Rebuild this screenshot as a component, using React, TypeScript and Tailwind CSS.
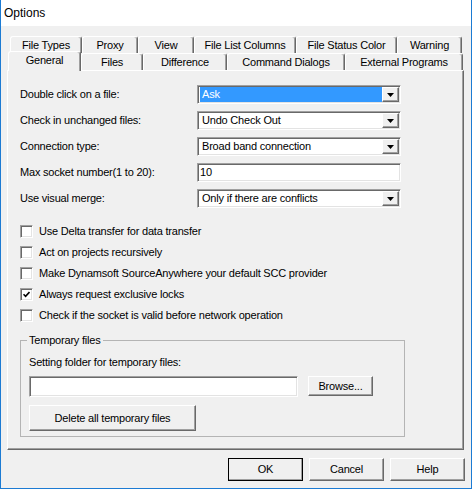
import React from 'react';

const backTabs = [
  { label: 'File Types', w: 'w-[72px]' },
  { label: 'Proxy', w: 'w-[56px]' },
  { label: 'View', w: 'w-[56px]' },
  { label: 'File List Columns', w: 'w-[102px]' },
  { label: 'File Status Color', w: 'w-[101px]' },
  { label: 'Warning', w: 'w-[65px]' },
];

const frontTabs = [
  { label: 'Files', w: 'w-[62px]' },
  { label: 'Difference', w: 'w-[84px]' },
  { label: 'Command Dialogs', w: 'w-[118px]' },
  { label: 'External Programs', w: 'w-[118px]' },
];

const checks = [
  { label: 'Use Delta transfer for data transfer', on: false },
  { label: 'Act on projects recursively', on: false },
  { label: 'Make Dynamsoft SourceAnywhere your default SCC provider', on: false },
  { label: 'Always request exclusive locks', on: true },
  { label: 'Check if the socket is valid before network operation', on: false },
];

const sunken =
  'border border-t-[#a0a0a0] border-l-[#a0a0a0] border-r-white border-b-white shadow-[inset_1px_1px_0_#696969,inset_-1px_-1px_0_#e3e3e3] bg-white';

const raised =
  'border border-t-white border-l-white border-r-[#696969] border-b-[#696969] shadow-[inset_-1px_-1px_0_#a0a0a0] bg-[#f0f0f0]';

const Tab: React.FC<{ label: string; w: string }> = ({ label, w }) => (
  <div
    className={`${w} h-full flex items-center justify-center border-t border-l border-white border-r border-r-[#696969] rounded-t-[3px] shadow-[inset_-1px_0_0_#a0a0a0]`}
  >
    {label}
  </div>
);

const DropArrow = () => (
  <div className={`${raised} w-[17px] h-full flex items-center justify-center`}>
    <svg width="7" height="4" viewBox="0 0 7 4">
      <path d="M0 0H7L3.5 4Z" fill="#000" />
    </svg>
  </div>
);

const Combo: React.FC<{ value: string; selected?: boolean }> = ({ value, selected }) => (
  <div className={`${sunken} h-[19px] p-px flex`}>
    <div className="flex-1 flex items-center pl-px">
      <span
        className={`flex-1 h-[15px] flex items-center pl-[2px] ${selected ? 'bg-[#3399ff] text-white' : ''}`}
      >
        {value}
      </span>
    </div>
    <DropArrow />
  </div>
);

const WinButton: React.FC<{ label: string; cls: string; isDefault?: boolean }> = ({ label, cls, isDefault }) => (
  <div className={`${cls} ${isDefault ? 'outline outline-1 outline-black -outline-offset-1' : ''} ${raised} flex items-center justify-center`}>
    {label}
  </div>
);

export default function App() {
  return (
    <div className="w-[472px] h-[489px] flex flex-col border-x border-b border-[#1c7bd3] bg-[#f0f0f0] font-['Liberation_Sans',Arial,sans-serif] text-[11px] tracking-[-0.2px] text-black leading-[13px] overflow-hidden">
      {/* Title bar */}
      <div className="h-[26px] bg-white pl-[3px] flex items-center text-[12px] tracking-normal">Options</div>

      <div className="px-[6px] pt-[10px]">
        {/* Tabs */}
        <div className="flex ml-[3px] h-[17px]">
          {backTabs.map((t) => (
            <Tab key={t.label} {...t} />
          ))}
        </div>
        <div className="flex ml-[3px] h-[17px]">
          <div className="relative z-10 -ml-[2px] -mt-[2px] w-[73px] h-[20px] pb-[2px] flex items-center justify-center bg-[#f0f0f0] border-t border-l border-white border-r border-r-[#696969] rounded-t-[3px] shadow-[inset_-1px_0_0_#a0a0a0]">
            General
          </div>
          {frontTabs.map((t) => (
            <Tab key={t.label} {...t} />
          ))}
        </div>

        {/* Tab page */}
        <div className="w-[457px] h-[380px] border border-t-white border-l-white border-r-[#696969] border-b-[#696969] shadow-[inset_-1px_-1px_0_#a0a0a0] pl-[12px] pt-[14px]">
          <div className="grid grid-cols-[177px_204px] gap-y-[7px] items-center">
            <span>Double click on a file:</span>
            <Combo value="Ask" selected />
            <span>Check in unchanged files:</span>
            <Combo value="Undo Check Out" />
            <span>Connection type:</span>
            <Combo value="Broad band connection" />
            <span>Max socket number(1 to 20):</span>
            <div className={`${sunken} h-[19px] flex items-center pl-[2px]`}>10</div>
            <span>Use visual merge:</span>
            <Combo value="Only if there are conflicts" />
          </div>

          <div className="mt-[17px] flex flex-col gap-[8px]">
            {checks.map((c) => (
              <div key={c.label} className="flex items-center gap-[6px] h-[13px]">
                <div className={`${sunken} w-[13px] h-[13px] flex items-center justify-center`}>
                  {c.on && (
                    <svg width="7" height="7" viewBox="0 0 7 7">
                      <path d="M0.5 3.2L2.6 5.4L6.5 1" stroke="#000" strokeWidth="1.6" fill="none" />
                    </svg>
                  )}
                </div>
                <span>{c.label}</span>
              </div>
            ))}
          </div>

          <fieldset className="mt-[12px] w-[385px] border border-[#b4b4b4] px-[8px] pb-[5px]">
            <legend className="-ml-[2px] px-[2px]">Temporary files</legend>
            <div className="mt-[9px]">Setting folder for temporary files:</div>
            <div className="mt-[7px] flex items-start gap-[10px]">
              <div className={`${sunken} w-[269px] h-[21px]`} />
              <WinButton label="Browse..." cls="w-[65px] h-[20px]" />
            </div>
            <WinButton label="Delete all temporary files" cls="mt-[8px] w-[167px] h-[26px]" />
          </fieldset>
        </div>

        {/* Dialog buttons */}
        <div className="mt-[8px] flex justify-end gap-[6px]">
          <WinButton label="OK" cls="w-[75px] h-[23px]" isDefault />
          <WinButton label="Cancel" cls="w-[75px] h-[23px]" />
          <WinButton label="Help" cls="w-[75px] h-[23px]" />
        </div>
      </div>
    </div>
  );
}
